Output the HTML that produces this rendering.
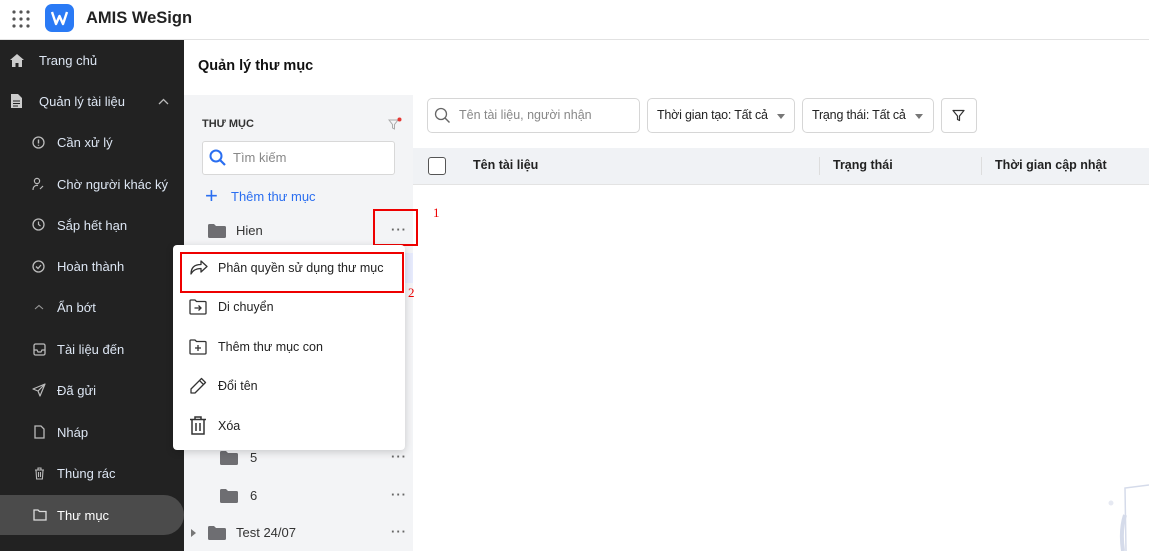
<!DOCTYPE html>
<html><head><meta charset="utf-8"><style>
*{box-sizing:border-box;margin:0;padding:0}
body{width:1149px;height:551px;overflow:hidden;background:#fff;font-family:"Liberation Sans",sans-serif;position:relative;color:#212121}
.abs{position:absolute}
.top{left:0;top:0;width:1149px;height:40px;border-bottom:1px solid #e2e2e2;background:#fff}
.side{left:0;top:40px;width:184px;height:511px;background:#222}
.si{position:absolute;left:0;width:184px;height:40px;color:#dde6f3;font-size:13px;display:flex;align-items:center}
.si svg{position:absolute}
.si span{position:absolute}
.fp{left:184px;top:95px;width:229px;height:456px;background:#f3f4f6}
.mi{position:absolute;left:16px;font-size:12.5px;color:#222;display:flex;align-items:center}
.mi span{position:absolute;left:28px;white-space:nowrap}
.dots{position:absolute;font-size:13px;color:#666;letter-spacing:1px;font-weight:bold}
</style></head><body>
<div class="abs top">
  <svg class="abs" style="left:12px;top:10px" width="18" height="18" viewBox="0 0 18 18" fill="#555"><circle cx="2" cy="2" r="1.6"/><circle cx="9" cy="2" r="1.6"/><circle cx="16" cy="2" r="1.6"/><circle cx="2" cy="9" r="1.6"/><circle cx="9" cy="9" r="1.6"/><circle cx="16" cy="9" r="1.6"/><circle cx="2" cy="16" r="1.6"/><circle cx="9" cy="16" r="1.6"/><circle cx="16" cy="16" r="1.6"/></svg>
  <div class="abs" style="left:45px;top:4px;width:29px;height:28px;border-radius:7px;background:#2a7af5"></div>
  <svg class="abs" style="left:50px;top:10px" width="19" height="16" viewBox="0 0 19 16"><path d="M2 2 L6 14 L9.5 6 L13 14 L17 2" stroke="#fff" stroke-width="2.4" fill="none" stroke-linejoin="round"/></svg>
  <div class="abs" style="left:86px;top:9px;font-size:16.5px;font-weight:bold;color:#222">AMIS WeSign</div>
</div>
<div class="abs side">
  <div class="si" style="top:0"><svg style="left:9px" width="16" height="15" viewBox="0 0 16 15"><path d="M8 1 L1 7 H3 V14 H6.5 V10 H9.5 V14 H13 V7 H15Z" fill="#ccc"/></svg><span style="left:39px">Trang chủ</span></div>
  <div class="si" style="top:41px"><svg style="left:10px" width="13" height="16" viewBox="0 0 13 16"><path d="M1 1H8L12 5V15H1Z" fill="#ccc"/><path d="M3 8H10M3 10.5H10M3 13H8" stroke="#222" stroke-width="1"/></svg><span style="left:39px">Quản lý tài liệu</span><svg style="left:158px" width="11" height="7" viewBox="0 0 11 7"><path d="M1 6L5.5 1.5L10 6" stroke="#bbb" stroke-width="1.3" fill="none"/></svg></div>
  <div class="si" style="top:82px"><svg style="left:32px" width="13" height="13" viewBox="0 0 13 13"><circle cx="6.5" cy="6.5" r="5.5" stroke="#bbb" fill="none" stroke-width="1.3"/><path d="M6.5 3.5V7.5M6.5 8.8V9.8" stroke="#bbb" stroke-width="1.4"/></svg><span style="left:57px">Cần xử lý</span></div>
  <div class="si" style="top:124px"><svg style="left:32px" width="13" height="14" viewBox="0 0 13 14"><circle cx="5" cy="4" r="2.6" stroke="#bbb" fill="none" stroke-width="1.2"/><path d="M1 13C1 9 4 8 6 8.5M8 12L11 9" stroke="#bbb" stroke-width="1.2" fill="none"/></svg><span style="left:57px">Chờ người khác ký</span></div>
  <div class="si" style="top:165px"><svg style="left:32px" width="14" height="14" viewBox="0 0 14 14"><circle cx="6.5" cy="6.5" r="5.5" stroke="#bbb" fill="none" stroke-width="1.3"/><path d="M6.5 3.5V6.5L8.5 8" stroke="#bbb" stroke-width="1.2" fill="none"/></svg><span style="left:57px">Sắp hết hạn</span></div>
  <div class="si" style="top:206px"><svg style="left:32px" width="13" height="13" viewBox="0 0 13 13"><circle cx="6.5" cy="6.5" r="5.5" stroke="#bbb" fill="none" stroke-width="1.3"/><path d="M4 6.5L6 8.5L9 5" stroke="#bbb" stroke-width="1.3" fill="none"/></svg><span style="left:57px">Hoàn thành</span></div>
  <div class="si" style="top:247px"><svg style="left:34px" width="10" height="6" viewBox="0 0 10 6"><path d="M1 5L5 1.5L9 5" stroke="#999" stroke-width="1.1" fill="none"/></svg><span style="left:57px">Ẩn bớt</span></div>
  <div class="si" style="top:289px"><svg style="left:33px" width="13" height="13" viewBox="0 0 13 13"><rect x="1" y="1" width="11" height="11" rx="1.5" stroke="#bbb" fill="none" stroke-width="1.3"/><path d="M1 7H4L5 9H8L9 7H12" stroke="#bbb" stroke-width="1.2" fill="none"/></svg><span style="left:57px">Tài liệu đến</span></div>
  <div class="si" style="top:330px"><svg style="left:32px" width="14" height="14" viewBox="0 0 14 14"><path d="M13 1L1 6L6 8L8 13Z M6 8L13 1" stroke="#bbb" stroke-width="1.2" fill="none" stroke-linejoin="round"/></svg><span style="left:57px">Đã gửi</span></div>
  <div class="si" style="top:372px"><svg style="left:34px" width="11" height="14" viewBox="0 0 11 14"><path d="M1 1H7L10 4V13H1Z" stroke="#bbb" stroke-width="1.3" fill="none"/></svg><span style="left:57px">Nháp</span></div>
  <div class="si" style="top:413px"><svg style="left:34px" width="11" height="13" viewBox="0 0 11 13"><path d="M1 3H10M4 3V1H7V3M2 3L2.6 12H8.4L9 3M4.5 5V10M6.5 5V10" stroke="#bbb" stroke-width="1.1" fill="none"/></svg><span style="left:57px">Thùng rác</span></div>
  <div class="si" style="top:455px;background:#4b4b4b;border-radius:0 20px 20px 0;height:40px"><svg style="left:33px" width="14" height="12" viewBox="0 0 14 12"><path d="M1 1H5L6.5 2.5H13V11H1Z" stroke="#ddd" stroke-width="1.3" fill="none"/></svg><span style="left:57px;color:#fff">Thư mục</span></div>
</div>
<div class="abs" style="left:198px;top:58px;font-size:14.5px;font-weight:bold;color:#111">Quản lý thư mục</div>
<div class="abs fp">
  <div class="abs" style="left:18px;top:23px;font-size:11px;font-weight:bold;color:#333">THƯ MỤC</div>
  <svg class="abs" style="left:204px;top:22px" width="14" height="14" viewBox="0 0 14 14"><path d="M1 3H10L6.5 7.5V12L4.5 11V7.5Z" stroke="#aaa" fill="none" stroke-width="1"/><circle cx="11.5" cy="2.5" r="2" fill="#e53935"/></svg>
  <div class="abs" style="left:18px;top:46px;width:193px;height:34px;background:#fff;border:1px solid #d8d8d8;border-radius:3px"></div>
  <svg class="abs" style="left:25px;top:54px" width="18" height="18" viewBox="0 0 18 18"><circle cx="7" cy="7" r="5.5" stroke="#2a6ef0" stroke-width="2" fill="none"/><path d="M11 11L16 16" stroke="#2a6ef0" stroke-width="2.2"/></svg>
  <div class="abs" style="left:49px;top:55px;font-size:13px;color:#888">Tìm kiếm</div>
  <div class="abs" style="left:21px;top:91px;font-size:22px;color:#2a6ef0;line-height:20px">+</div>
  <div class="abs" style="left:47px;top:94px;font-size:13px;color:#2a6ef0">Thêm thư mục</div>
  <svg class="abs" style="left:24px;top:129px" width="18" height="14" viewBox="0 0 18 14"><path d="M0 1.5Q0 0 1.5 0H6L8 2H16.5Q18 2 18 3.5V12.5Q18 14 16.5 14H1.5Q0 14 0 12.5Z" fill="#6e6e72"/></svg>
  <div class="abs" style="left:52px;top:128px;font-size:13px;color:#333">Hien</div>
  <div class="dots" style="left:207px;top:127px">···</div>
  <div class="abs" style="left:36px;top:356px"><svg width="18" height="14" viewBox="0 0 18 14"><path d="M0 1.5Q0 0 1.5 0H6L8 2H16.5Q18 2 18 3.5V12.5Q18 14 16.5 14H1.5Q0 14 0 12.5Z" fill="#6e6e72"/></svg></div>
  <div class="abs" style="left:66px;top:355px;font-size:13px;color:#333">5</div>
  <div class="dots" style="left:207px;top:354px">···</div>
  <div class="abs" style="left:36px;top:394px"><svg width="18" height="14" viewBox="0 0 18 14"><path d="M0 1.5Q0 0 1.5 0H6L8 2H16.5Q18 2 18 3.5V12.5Q18 14 16.5 14H1.5Q0 14 0 12.5Z" fill="#6e6e72"/></svg></div>
  <div class="abs" style="left:66px;top:393px;font-size:13px;color:#333">6</div>
  <div class="dots" style="left:207px;top:392px">···</div>
  <div class="abs" style="left:7px;top:434px;width:0;height:0;border-left:5px solid #777;border-top:4px solid transparent;border-bottom:4px solid transparent"></div>
  <div class="abs" style="left:24px;top:431px"><svg width="18" height="14" viewBox="0 0 18 14"><path d="M0 1.5Q0 0 1.5 0H6L8 2H16.5Q18 2 18 3.5V12.5Q18 14 16.5 14H1.5Q0 14 0 12.5Z" fill="#6e6e72"/></svg></div>
  <div class="abs" style="left:52px;top:430px;font-size:13px;color:#333">Test 24/07</div>
  <div class="dots" style="left:207px;top:429px">···</div>
</div>
<div class="abs" style="left:198px;top:253px;width:215px;height:30px;background:#e6eafc"></div>
<div class="abs" style="left:373px;top:209px;width:45px;height:37px;border:2px solid #e00"></div>
<div class="abs" style="left:433px;top:205px;font-size:13px;color:#e00;font-family:'Liberation Serif',serif">1</div>
<div class="abs" style="left:173px;top:245px;width:232px;height:205px;background:#fff;border-radius:4px;box-shadow:0 2px 8px rgba(0,0,0,.18)">
  <div class="abs" style="left:7px;top:7px;width:224px;height:41px;border:2.5px solid #e00"></div>
  <div class="mi" style="top:15px"><svg width="20" height="16" viewBox="0 0 20 16"><path d="M12 1L18 6.5L12 12V8.5C7 8.5 4 10 2 14C2 8 5 4.5 12 4.5Z" stroke="#333" stroke-width="1.3" fill="none" stroke-linejoin="round"/></svg><span style="left:29px">Phân quyền sử dụng thư mục</span></div>
  <div class="mi" style="top:54px"><svg width="18" height="16" viewBox="0 0 18 16"><path d="M1 2Q1 1 2 1H6L7.5 2.5H16Q17 2.5 17 3.5V14Q17 15 16 15H2Q1 15 1 14Z" stroke="#333" stroke-width="1.3" fill="none"/><path d="M5.5 9H12M9.5 6.5L12 9L9.5 11.5" stroke="#333" stroke-width="1.3" fill="none"/></svg><span style="left:29px">Di chuyển</span></div>
  <div class="mi" style="top:94px"><svg width="18" height="16" viewBox="0 0 18 16"><path d="M1 2Q1 1 2 1H6L7.5 2.5H16Q17 2.5 17 3.5V14Q17 15 16 15H2Q1 15 1 14Z" stroke="#333" stroke-width="1.3" fill="none"/><path d="M6 9H12M9 6V12" stroke="#333" stroke-width="1.3"/></svg><span style="left:29px">Thêm thư mục con</span></div>
  <div class="mi" style="top:132px"><svg width="18" height="18" viewBox="0 0 18 18"><path d="M12.5 1.5L16.5 5.5L6 16H2V12Z M10.5 3.5L14.5 7.5" stroke="#333" stroke-width="1.3" fill="none" stroke-linejoin="round"/></svg><span style="left:29px">Đổi tên</span></div>
  <div class="mi" style="top:171px"><svg width="18" height="19" viewBox="0 0 18 19"><path d="M1 3.5H17M6 3.5V1H12V3.5M3 3.5V18H15V3.5M7 7V15M11 7V15" stroke="#333" stroke-width="1.5" fill="none"/></svg><span style="left:29px">Xóa</span></div>
</div>
<div class="abs" style="left:408px;top:285px;font-size:13px;color:#e00;font-family:'Liberation Serif',serif">2</div>
<div class="abs" style="left:427px;top:98px;width:213px;height:35px;border:1px solid #d6d6d6;border-radius:5px"></div>
<svg class="abs" style="left:434px;top:107px" width="17" height="17" viewBox="0 0 17 17"><circle cx="7" cy="7" r="5.5" stroke="#666" stroke-width="1.3" fill="none"/><path d="M11 11L15.5 15.5" stroke="#666" stroke-width="1.4"/></svg>
<div class="abs" style="left:459px;top:108px;font-size:12.5px;color:#888">Tên tài liệu, người nhận</div>
<div class="abs" style="left:647px;top:98px;width:148px;height:35px;border:1px solid #d6d6d6;border-radius:5px"></div>
<div class="abs" style="left:657px;top:108px;font-size:12.5px;color:#222;letter-spacing:-0.2px">Thời gian tạo: Tất cả</div>
<div class="abs" style="left:777px;top:114px;border-top:5px solid #777;border-left:4px solid transparent;border-right:4px solid transparent"></div>
<div class="abs" style="left:802px;top:98px;width:132px;height:35px;border:1px solid #d6d6d6;border-radius:5px"></div>
<div class="abs" style="left:812px;top:108px;font-size:12.5px;color:#222;letter-spacing:-0.2px">Trạng thái: Tất cả</div>
<div class="abs" style="left:915px;top:114px;border-top:5px solid #777;border-left:4px solid transparent;border-right:4px solid transparent"></div>
<div class="abs" style="left:941px;top:98px;width:36px;height:35px;border:1px solid #d6d6d6;border-radius:4px"></div>
<svg class="abs" style="left:952px;top:109px" width="13" height="13" viewBox="0 0 13 13"><path d="M1 1.5H12L7.5 7V11.5L5.5 10.5V7Z" stroke="#333" stroke-width="1.2" fill="none" stroke-linejoin="round"/></svg>
<div class="abs" style="left:413px;top:148px;width:736px;height:37px;background:#f0f2f5;border-bottom:1px solid #e3e3e3"></div>
<div class="abs" style="left:428px;top:157px;width:18px;height:18px;border:1.3px solid #555;border-radius:3px;background:#fff"></div>
<div class="abs" style="left:473px;top:158px;font-size:12.5px;font-weight:bold;color:#222">Tên tài liệu</div>
<div class="abs" style="left:819px;top:157px;width:1px;height:18px;background:#ddd"></div>
<div class="abs" style="left:833px;top:158px;font-size:12.5px;font-weight:bold;color:#222">Trạng thái</div>
<div class="abs" style="left:981px;top:157px;width:1px;height:18px;background:#ddd"></div>
<div class="abs" style="left:995px;top:158px;font-size:12.5px;font-weight:bold;color:#222">Thời gian cập nhật</div>
<svg class="abs" style="left:1105px;top:480px" width="44" height="71" viewBox="0 0 44 71"><circle cx="6" cy="23" r="2.5" fill="#e6e9f2"/><path d="M21 71L20 8L44 5" stroke="#d5dbea" stroke-width="1.5" fill="none"/><path d="M20 35Q15 50 18 71" stroke="#d5dbea" stroke-width="4" fill="none"/></svg>
</body></html>
